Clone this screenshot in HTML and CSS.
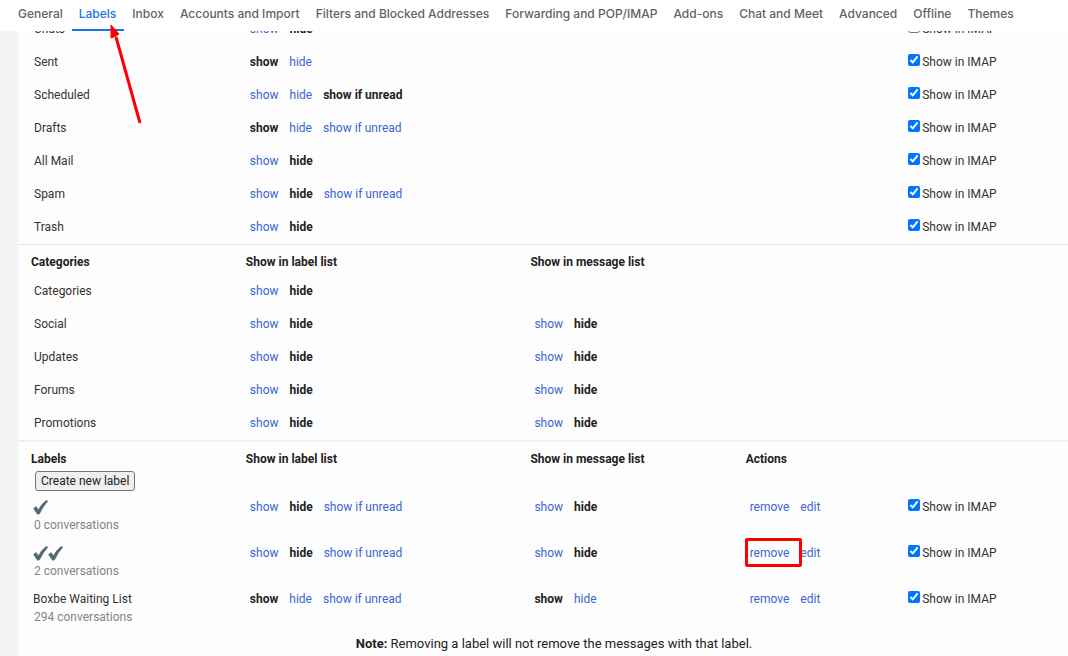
FILE: index.html
```html
<!DOCTYPE html>
<html lang="en">
<head>
<meta charset="utf-8">
<title>Settings - Labels</title>
<link rel="stylesheet" href="styles.css">
</head>
<body>
<nav class="tabs">
  <a href="#general">General</a>
  <a href="#labels" class="active" aria-current="page">Labels</a>
  <a href="#inbox">Inbox</a>
  <a href="#accounts">Accounts and Import</a>
  <a href="#filters">Filters and Blocked Addresses</a>
  <a href="#forwarding">Forwarding and POP/IMAP</a>
  <a href="#addons">Add-ons</a>
  <a href="#chat">Chat and Meet</a>
  <a href="#advanced">Advanced</a>
  <a href="#offline">Offline</a>
  <a href="#themes">Themes</a>
</nav>
<main class="pane">
<table class="labels">
  <colgroup><col class="c-name"><col class="c-list"><col class="c-message"><col class="c-actions"><col class="c-imap"></colgroup>
  <tbody class="system">
    <tr><td>Chats</td><td><div class="opts"><a href="#">show</a><b>hide</b></div></td><td></td><td></td><td><label class="imap"><input type="checkbox">Show in IMAP</label></td></tr>
    <tr><td>Sent</td><td><div class="opts"><b>show</b><a href="#">hide</a></div></td><td></td><td></td><td><label class="imap"><input type="checkbox" checked>Show in IMAP</label></td></tr>
    <tr><td>Scheduled</td><td><div class="opts"><a href="#">show</a><a href="#">hide</a><b>show if unread</b></div></td><td></td><td></td><td><label class="imap"><input type="checkbox" checked>Show in IMAP</label></td></tr>
    <tr><td>Drafts</td><td><div class="opts"><b>show</b><a href="#">hide</a><a href="#">show if unread</a></div></td><td></td><td></td><td><label class="imap"><input type="checkbox" checked>Show in IMAP</label></td></tr>
    <tr><td>All Mail</td><td><div class="opts"><a href="#">show</a><b>hide</b></div></td><td></td><td></td><td><label class="imap"><input type="checkbox" checked>Show in IMAP</label></td></tr>
    <tr><td>Spam</td><td><div class="opts"><a href="#">show</a><b>hide</b><a href="#">show if unread</a></div></td><td></td><td></td><td><label class="imap"><input type="checkbox" checked>Show in IMAP</label></td></tr>
    <tr><td>Trash</td><td><div class="opts"><a href="#">show</a><b>hide</b></div></td><td></td><td></td><td><label class="imap"><input type="checkbox" checked>Show in IMAP</label></td></tr>
  </tbody>
  <tbody class="categories">
    <tr class="head"><th>Categories</th><th>Show in label list</th><th>Show in message list</th><th></th><th></th></tr>
    <tr><td>Categories</td><td><div class="opts"><a href="#">show</a><b>hide</b></div></td><td></td><td></td><td></td></tr>
    <tr><td>Social</td><td><div class="opts"><a href="#">show</a><b>hide</b></div></td><td><div class="opts"><a href="#">show</a><b>hide</b></div></td><td></td><td></td></tr>
    <tr><td>Updates</td><td><div class="opts"><a href="#">show</a><b>hide</b></div></td><td><div class="opts"><a href="#">show</a><b>hide</b></div></td><td></td><td></td></tr>
    <tr><td>Forums</td><td><div class="opts"><a href="#">show</a><b>hide</b></div></td><td><div class="opts"><a href="#">show</a><b>hide</b></div></td><td></td><td></td></tr>
    <tr><td>Promotions</td><td><div class="opts"><a href="#">show</a><b>hide</b></div></td><td><div class="opts"><a href="#">show</a><b>hide</b></div></td><td></td><td></td></tr>
  </tbody>
  <tbody class="custom">
    <tr class="head"><th>Labels</th><th>Show in label list</th><th>Show in message list</th><th>Actions</th><th></th></tr>
    <tr class="create"><td colspan="5"><button type="button">Create new label</button></td></tr>
    <tr>
      <td><div class="name"><svg class="tick" viewBox="0 0 15 15" role="img" aria-label="Check mark"><path d="M.5 8.5 2.7 6.8Q3.4 6.5 3.8 7.2L5.4 9.8Q8.3 4.2 12.4 1Q13.4.3 14.4.8Q14.9 1.1 14.4 1.8Q10 6.5 6.9 13.2Q6 14.8 4.7 14.2Q4 13.8 3.6 13Z"/></svg></div><div class="count">0 conversations</div></td>
      <td><div class="opts"><a href="#">show</a><b>hide</b><a href="#">show if unread</a></div></td>
      <td><div class="opts"><a href="#">show</a><b>hide</b></div></td>
      <td><div class="opts"><a href="#">remove</a><a href="#">edit</a></div></td>
      <td><label class="imap"><input type="checkbox" checked>Show in IMAP</label></td>
    </tr>
    <tr>
      <td><div class="name"><svg class="tick" viewBox="0 0 15 15" role="img" aria-label="Check mark"><path d="M.5 8.5 2.7 6.8Q3.4 6.5 3.8 7.2L5.4 9.8Q8.3 4.2 12.4 1Q13.4.3 14.4.8Q14.9 1.1 14.4 1.8Q10 6.5 6.9 13.2Q6 14.8 4.7 14.2Q4 13.8 3.6 13Z"/></svg><svg class="tick" viewBox="0 0 15 15" role="img" aria-label="Check mark"><path d="M.5 8.5 2.7 6.8Q3.4 6.5 3.8 7.2L5.4 9.8Q8.3 4.2 12.4 1Q13.4.3 14.4.8Q14.9 1.1 14.4 1.8Q10 6.5 6.9 13.2Q6 14.8 4.7 14.2Q4 13.8 3.6 13Z"/></svg></div><div class="count">2 conversations</div></td>
      <td><div class="opts"><a href="#">show</a><b>hide</b><a href="#">show if unread</a></div></td>
      <td><div class="opts"><a href="#">show</a><b>hide</b></div></td>
      <td><div class="opts"><a href="#" class="marked">remove</a><a href="#">edit</a></div></td>
      <td><label class="imap"><input type="checkbox" checked>Show in IMAP</label></td>
    </tr>
    <tr>
      <td><div class="name">Boxbe Waiting List</div><div class="count">294 conversations</div></td>
      <td><div class="opts"><b>show</b><a href="#">hide</a><a href="#">show if unread</a></div></td>
      <td><div class="opts"><b>show</b><a href="#">hide</a></div></td>
      <td><div class="opts"><a href="#">remove</a><a href="#">edit</a></div></td>
      <td><label class="imap"><input type="checkbox" checked>Show in IMAP</label></td>
    </tr>
  </tbody>
</table>
<p class="note"><b>Note:</b> Removing a label will not remove the messages with that label.</p>
</main>
<svg class="arrow" viewBox="0 0 40 104" aria-hidden="true"><path d="M10 15 34 101" stroke="#f00" stroke-width="3" fill="none"/><path d="M5 3 13 12 10 14 5 16Z" fill="#f00" stroke="#f00"/></svg>
</body>
</html>
```
FILE: styles.css
```css
* { box-sizing: border-box; }
body {
  margin: 0;
  height: 100vh;
  display: flex;
  flex-direction: column;
  overflow: hidden;
  background: #f4f4f4;
  color: #222;
  font: 12px/18px Roboto, Arial, sans-serif;
}
a { color: #3c66d0; text-decoration: none; }
.tabs {
  display: flex;
  flex: none;
  height: 31px;
  padding-left: 10px;
  background: #fff;
  font: 500 12px/27px Inter, sans-serif;
  white-space: nowrap;
}
.tabs a { position: relative; padding: 0 8px; color: #5f6368; }
.tabs .active { color: #1a73e8; }
.tabs .active::after {
  content: "";
  position: absolute;
  left: 1px;
  right: 0;
  bottom: 0;
  height: 2px;
  background: #1a73e8;
}
.pane {
  flex: 1;
  min-height: 0;
  margin-left: 18px;
  overflow: hidden;
  background: #fdfdfd;
}
.labels {
  width: 100%;
  margin-top: -18px;
  table-layout: fixed;
  border-spacing: 0;
}
.c-name { width: 21.7%; }
.c-list { width: 27.1%; }
.c-message { width: 20.5%; }
.c-actions { width: 15.1%; }
.c-imap { width: 15.6%; }
td { height: 33px; padding: 0 0 0 4px; color: #333; }
td b { color: #222; }
.system td, .categories td { padding-bottom: 2px; }
td:first-child { padding-left: 16px; }
th {
  height: 31px;
  padding: 6px 0 0;
  border-top: 1px solid #e5e5e5;
  text-align: left;
  vertical-align: top;
  line-height: 22px;
}
th:first-child { padding-left: 13px; }
th, b { font-weight: 700; }
.custom th { border-top: 2px solid #efefef; }
.opts { display: flex; gap: 11px; white-space: nowrap; }
.imap { display: flex; gap: 2px; white-space: nowrap; }
.imap input { width: 12px; height: 12px; margin: 1px 0 0; }
.create button {
  display: block;
  height: 20px;
  padding: 0 5px;
  border: 1px solid #767676;
  border-radius: 3px;
  background: #efefef;
  color: #222;
  font: 12px/18px Roboto, Arial, sans-serif;
}
.custom td { height: 46px; padding-top: 6px; vertical-align: top; }
.custom .create td { height: 21px; padding-top: 0; }
.custom td:first-child { padding-left: 15px; }
.custom .create td:first-child { padding-left: 17px; }
.name { display: flex; align-items: center; height: 18px; }
.tick { width: 15px; height: 15px; fill: #4f6873; stroke: #4f6873; stroke-width: 0.5; }
.count { padding-left: 1px; color: #848484; }
.marked { position: relative; }
.marked::after {
  content: "";
  position: absolute;
  inset: -6px -13px -5px -5px;
  border: 3px solid #f00;
  border-radius: 2px;
}
.note { margin: 5px 0 0; padding-left: 22px; text-align: center; font-size: 13px; }
.arrow { position: absolute; left: 106px; top: 22px; width: 40px; height: 104px; }
```
